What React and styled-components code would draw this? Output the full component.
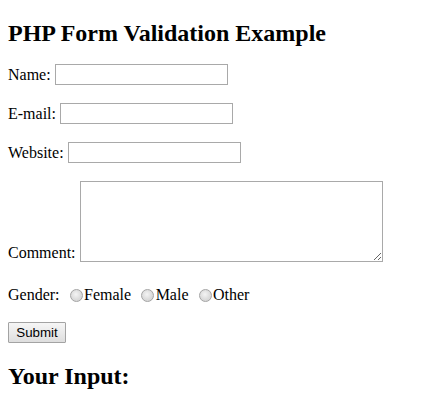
import React from 'react';
import styled, { createGlobalStyle } from 'styled-components';

const GlobalStyle = createGlobalStyle`
  html, body {
    margin: 0;
    padding: 0;
    background: #fff;
  }
  body {
    font-family: "Liberation Serif", "Times New Roman", serif;
    font-size: 16px;
    color: #000;
  }
`;

const Page = styled.div`
  padding: 0 8px;
`;

const Heading = styled.h2`
  margin: 19px 0 ${p => p.$after || 0}px;
  font-size: 24px;
  font-weight: bold;
  line-height: 28px;
`;

const Form = styled.form`
  display: flex;
  flex-direction: column;
  gap: 18px;
  align-items: flex-start;
`;

const Row = styled.div`
  display: flex;
  align-items: ${p => (p.$bottom ? 'flex-end' : 'center')};
  gap: ${p => (p.$tight ? 0 : 4)}px;
  line-height: 18px;
  margin-bottom: ${p => p.$extra || 0}px;
`;

const Label = styled.span``;

const TextInput = styled.input`
  box-sizing: border-box;
  width: 173px;
  height: 21px;
  margin: 0;
  padding: 1px 2px;
  border: 1px solid #a9a9a9;
  font: 13px "Liberation Sans", Arial, sans-serif;
`;

const TextArea = styled.textarea`
  box-sizing: border-box;
  width: 303px;
  height: 81px;
  margin: 0;
  padding: 2px;
  border: 1px solid #a9a9a9;
  font: 13px "Liberation Mono", monospace;
`;

const Option = styled.label`
  display: inline-flex;
  align-items: center;
`;

const Radio = styled.span`
  display: inline-block;
  box-sizing: border-box;
  width: 13px;
  height: 13px;
  border-radius: 50%;
  border: 1px solid #a4a4a4;
  background: radial-gradient(circle at 45% 40%, #f4f4f4 0, #dcdcdc 55%, #cfcfcf 100%);
  margin: 1px 1.5px 0 10px;
`;

const Submit = styled.button`
  box-sizing: border-box;
  width: 58px;
  height: 21px;
  margin: 0;
  padding: 0;
  border: 1px solid #a3a3a3;
  border-radius: 1px;
  background: linear-gradient(#f6f6f6, #dedede);
  font: 13.33px "Liberation Sans", Arial, sans-serif;
  color: #000;
`;

export default function App() {
  return (
    <Page>
      <GlobalStyle />
      <Heading $after={17}>PHP Form Validation Example</Heading>
      <Form>
        <Row>
          <Label>Name:</Label>
          <TextInput type="text" />
        </Row>
        <Row>
          <Label>E-mail:</Label>
          <TextInput type="text" />
        </Row>
        <Row>
          <Label>Website:</Label>
          <TextInput type="text" />
        </Row>
        <Row $bottom $extra={6}>
          <Label>Comment:</Label>
          <TextArea />
        </Row>
        <Row $tight>
          <Label>Gender:</Label>
          <Option><Radio />Female</Option>
          <Option><Radio />Male</Option>
          <Option><Radio />Other</Option>
        </Row>
        <Submit type="button">Submit</Submit>
      </Form>
      <Heading>Your Input:</Heading>
    </Page>
  );
}
